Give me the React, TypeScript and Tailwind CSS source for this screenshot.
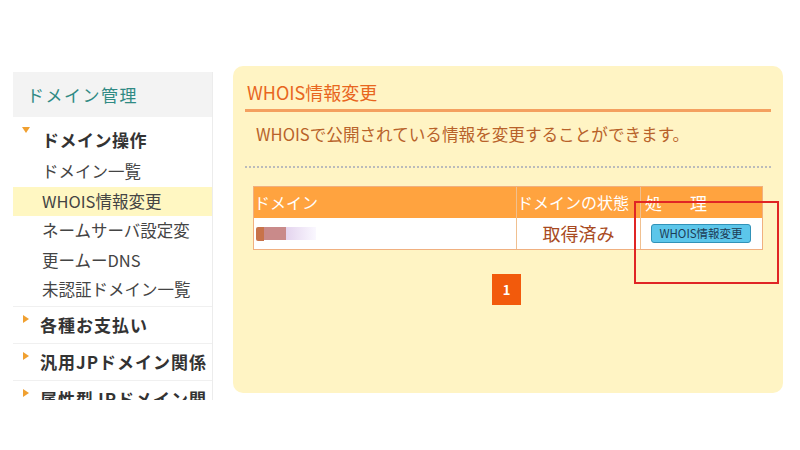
import React from "react";

const font = { fontFamily: '"Noto Sans CJK JP", "Noto Sans", sans-serif' };

const Arrow = ({ down }: { down?: boolean }) => (
  <span className="w-[14px] flex justify-center pt-[2px]">
    {down ? (
      <span className="block w-0 h-0 border-l-[4px] border-r-[4px] border-t-[6px] border-l-transparent border-r-transparent border-t-[#f0a030]" />
    ) : (
      <span className="block w-0 h-0 border-t-[4px] border-b-[4px] border-l-[6px] border-t-transparent border-b-transparent border-l-[#f0a030]" />
    )}
  </span>
);

const Sidebar = () => (
  <div className="w-[200px] h-[328px] mt-[72px] overflow-hidden border-r border-[#ececec] bg-white">
    <div className="h-[45px] bg-[#f3f3f3] flex items-center pl-[14px] text-[17px] text-[#2f8a84] tracking-[1.5px]">
      ドメイン管理
    </div>
    <div className="pt-[8px] pb-[1px] border-b border-[#f0f0f0]">
      <div className="flex items-start pl-[6px] h-[32px]">
        <Arrow down />
        <span className="ml-[9px] text-[17px] font-bold text-[#333] leading-[30px] tracking-[0.5px]">ドメイン操作</span>
      </div>
      <div className="text-[16.5px] text-[#444] leading-[29.5px]">
        <div className="pl-[29px]">ドメイン一覧</div>
        <div className="pl-[29px] bg-[#fff7c2]">WHOIS情報変更</div>
        <div className="pl-[29px]">
          ネームサーバ設定変
          <br />
          更ームーDNS
        </div>
        <div className="pl-[29px]">未認証ドメイン一覧</div>
      </div>
    </div>
    {["各種お支払い", "汎用JPドメイン関係", "属性型JPドメイン関"].map((t) => (
      <div key={t} className="flex items-start pl-[6px] h-[37px] pt-[6px] border-b border-[#f0f0f0]">
        <Arrow />
        <span className="ml-[7px] text-[17px] font-bold text-[#333] leading-[24px] whitespace-nowrap tracking-[1px]">{t}</span>
      </div>
    ))}
  </div>
);

const Main = () => (
  <div className="relative w-[550px] h-[327px] mt-[66px] ml-[20px] bg-[#fff4c4] rounded-[10px] px-[12px] pt-[14px]">
    <div className="pl-[2px] text-[18px] text-[#e8661e] leading-[24px]">WHOIS情報変更</div>
    <div className="mt-[5px] h-[3px] bg-[#f4a060]" />
    <div className="mt-[10px] pl-[11px] text-[16.6px] text-[#b8622a] leading-[24px]">
      WHOISで公開されている情報を変更することができます。
    </div>
    <div className="mt-[20px] border-t-2 border-dotted border-[#bbb]" />
    <div className="mt-[18px] ml-[8px] w-[510px] border border-[#f0b080]">
      <div className="flex h-[31px] bg-[#ffa33f] text-white leading-[31px]">
        <div className="w-[263px] border-r border-[#f0c090] text-[16px]">ドメイン</div>
        <div className="w-[124px] border-r border-[#f0c090] text-[16px] whitespace-nowrap overflow-hidden">ドメインの状態</div>
        <div className="flex-1 pl-[4px] tracking-[28px] text-[17px]">処理</div>
      </div>
      <div className="flex h-[31px] bg-white items-center">
        <div className="w-[263px] h-full border-r border-[#f0c090] flex items-center">
          <span className="w-[8px] h-[14px] bg-[#c8734a] ml-[2px] rounded-l-[2px]" />
          <span className="w-[22px] h-[13px] bg-[#c98a8a]" />
          <span className="w-[30px] h-[13px] bg-gradient-to-r from-[#e4d4ee] to-[#faf8ff]" />
        </div>
        <div className="w-[124px] h-full border-r border-[#f0c090] flex items-center justify-center text-[18px] text-[#a84a22]">
          取得済み
        </div>
        <div className="flex-1 flex pl-[10px]">
          <span className="w-[100px] h-[19px] bg-[#5cc6ea] border border-[#3192b8] rounded-[3px] text-[11.5px] text-[#1d3c55] leading-[17px] text-center whitespace-nowrap">
            WHOIS情報変更
          </span>
        </div>
      </div>
    </div>
    <div className="mt-[24px] flex justify-center">
      <span className="w-[29px] h-[31px] ml-[-3px] bg-[#f25a0c] text-white text-[13px] font-bold flex items-center justify-center">
        1
      </span>
    </div>
    <div className="absolute left-[401px] top-[135px] w-[145px] h-[83px] border-2 border-[#e02525]" />
  </div>
);

export default function App() {
  return (
    <div className="w-[800px] h-[450px] bg-white flex pl-[13px] overflow-hidden" style={font}>
      <Sidebar />
      <Main />
    </div>
  );
}
